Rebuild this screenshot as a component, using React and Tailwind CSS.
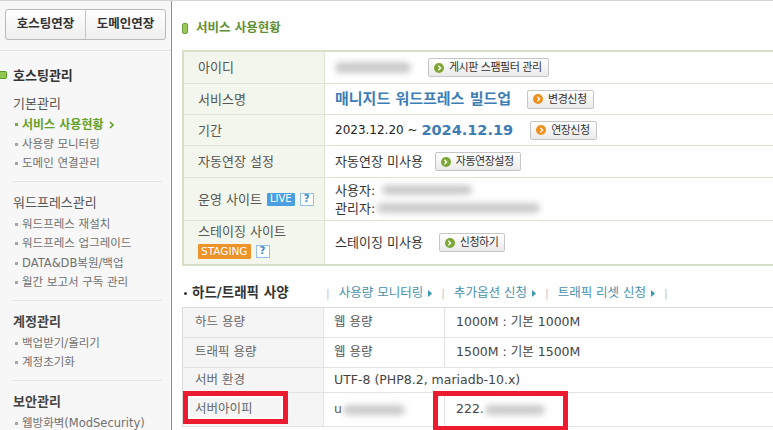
import React from "react";

const SECTIONS = [
  {
    title: "워드프레스관리",
    bold: false,
    items: ["워드프레스 재설치", "워드프레스 업그레이드", "DATA&DB복원/백업", "월간 보고서 구독 관리"],
  },
  { title: "계정관리", bold: true, items: ["백업받기/올리기", "계정초기화"] },
  { title: "보안관리", bold: true, items: ["웹방화벽(ModSecurity)"] },
];

function Chevron({ className }) {
  return (
    <svg viewBox="0 0 6 8" className={className}>
      <path d="M1.5 1 L4.5 4 L1.5 7" fill="none" stroke="currentColor" strokeWidth="1.7" />
    </svg>
  );
}

function Btn({ tone = "green", children }) {
  return (
    <span className="inline-flex h-[19px] items-center rounded-[2px] border border-[#c6c6c6] bg-linear-to-b from-white to-[#eaeaea] pl-[5px] pr-[6px] text-[11px] leading-none tracking-[-0.5px] text-[#333]">
      <span
        className={
          tone === "orange"
            ? "mr-[5px] flex h-[10px] w-[10px] items-center justify-center rounded-full bg-[#f0901c] text-white"
            : "mr-[5px] flex h-[10px] w-[10px] items-center justify-center rounded-full bg-[#7da735] text-white"
        }
      >
        <Chevron className="h-[6px] w-[5px]" />
      </span>
      {children}
    </span>
  );
}

function Blur({ className }) {
  return <span className={`inline-block rounded-full bg-[#cacaca] blur-[3px] ${className}`} />;
}

function Help() {
  return (
    <span className="flex h-[13px] w-[14px] items-center justify-center border border-[#93c0e4] bg-white text-[10px] font-bold leading-none text-[#3a86c8]">
      ?
    </span>
  );
}

function SideItem({ label, active }) {
  return (
    <li className="flex h-[19.5px] items-center">
      <span className={active ? "ml-[2px] mr-[4px] h-[3px] w-[3px] bg-[#7bab45]" : "ml-[2px] mr-[4px] h-[3px] w-[3px] bg-[#a5a5a5]"} />
      {active ? (
        <span className="flex items-center text-[12px] font-bold text-[#63a12a]">
          서비스 사용현황
          <Chevron className="ml-[5px] h-[8px] w-[7px]" />
        </span>
      ) : (
        <span className="text-[11.5px] text-[#707070]">{label}</span>
      )}
    </li>
  );
}

function Row1({ h, label, children, last }) {
  return (
    <div className={`flex ${h} ${last ? "" : "border-b border-[#dfe5d5]"}`}>
      <div className="flex w-[141px] shrink-0 items-center border-r border-[#dfe5d5] bg-[#f3f6ec] pl-[14px] text-[13px] text-[#555]">
        {label}
      </div>
      <div className="flex flex-1 items-center pl-[10px] text-[13px] text-[#333]">{children}</div>
    </div>
  );
}

function Row2({ h, label, mid, right, span }) {
  return (
    <div className={`flex ${h} border-b border-[#e3e3e3]`}>
      <div className="flex w-[141px] shrink-0 items-center border-r border-[#e3e3e3] bg-[#f5f5f5] pl-[12px] text-[12.5px] text-[#666]">
        {label}
      </div>
      {span ? (
        <div className="flex flex-1 items-center pl-[10px] text-[12.5px] text-[#444]">{span}</div>
      ) : (
        <>
          <div className="flex w-[121px] shrink-0 items-center border-r border-[#e3e3e3] pl-[10px] text-[12.5px] text-[#555]">
            {mid}
          </div>
          <div className="flex flex-1 items-center pl-[11px] text-[12.5px] text-[#444]">{right}</div>
        </>
      )}
    </div>
  );
}

function LinkItem({ children }) {
  return (
    <>
      <span className="ml-[9px] text-[12.5px] text-[#4a8fae]">{children}</span>
      <svg viewBox="0 0 4 7" className="ml-[5px] h-[7px] w-[4px] text-[#3a97b0]">
        <path d="M0 0 L4 3.5 L0 7 Z" fill="currentColor" />
      </svg>
      <span className="ml-[9px] text-[11px] text-[#c6c6c6]">|</span>
    </>
  );
}

export default function App() {
  return (
    <div className="relative flex h-[430px] w-[773px] overflow-hidden border-t border-[#d4d4d4] bg-white font-['DejaVu_Sans','Noto_Sans_CJK_KR',sans-serif] leading-none">
      <aside className="w-[171px] shrink-0 bg-[#f7f7f7]">
        <div className="h-[50px] border-b border-[#e2e2e2] px-[5px] pt-[8px]">
          <div className="flex h-[31px] rounded-[3px] border border-[#b9b9b9] bg-linear-to-b from-white to-[#eeeeee] text-[12.5px] font-bold text-[#333]">
            <span className="flex flex-1 items-center justify-center border-r border-[#c4c4c4]">호스팅연장</span>
            <span className="flex flex-1 items-center justify-center">도메인연장</span>
          </div>
        </div>

        <div className="pl-[13px] pr-[9px]">
          <div className="pb-[7px] pt-[14px]">
            <div className="-ml-[13px] flex h-[20px] items-center">
              <span className="h-[8px] w-[7px] rounded-r-[2px] border border-l-0 border-[#5e9a2b] bg-[#8fc64f]" />
              <span className="ml-[6px] text-[13px] font-bold text-[#333]">호스팅관리</span>
            </div>
            <div className="mt-[8px] flex h-[20px] items-center text-[13px] text-[#555]">기본관리</div>
            <ul className="mt-[2px]">
              <SideItem active />
              <SideItem label="사용량 모니터링" />
              <SideItem label="도메인 연결관리" />
            </ul>
          </div>

          {SECTIONS.map((section) => (
            <div key={section.title} className="border-t border-[#e3e3e3] pb-[7px] pt-[11px]">
              <div
                className={
                  section.bold
                    ? "flex h-[20px] items-center text-[13px] font-bold text-[#444]"
                    : "flex h-[20px] items-center text-[13px] text-[#555]"
                }
              >
                {section.title}
              </div>
              <ul className="mt-[2px]">
                {section.items.map((item) => (
                  <SideItem key={item} label={item} />
                ))}
              </ul>
            </div>
          ))}
        </div>
      </aside>

      <main className="flex-1 border-l border-[#8e8e8e] pl-[10px]">
        <div className="mt-[20px] flex h-[14px] items-center">
          <span className="h-[11px] w-[6px] rounded-[2px] border border-[#6a9b3a] bg-[#9acb5a]" />
          <span className="ml-[8px] text-[12.5px] font-bold text-[#5f8f35]">서비스 사용현황</span>
        </div>

        <div className="mt-[15px] border-y-2 border-l-2 border-[#d6e0c7]">
          <Row1 h="h-[32px]" label="아이디">
            <Blur className="h-[11px] w-[76px]" />
            <span className="ml-[17px]">
              <Btn>게시판 스팸필터 관리</Btn>
            </span>
          </Row1>
          <Row1 h="h-[31px]" label="서비스명">
            <span className="text-[15px] font-bold text-[#3d7db6]">매니지드 워드프레스 빌드업</span>
            <span className="ml-[16px]">
              <Btn tone="orange">변경신청</Btn>
            </span>
          </Row1>
          <Row1 h="h-[31px]" label="기간">
            <span className="text-[12px] text-[#222]">2023.12.20 ~&nbsp;</span>
            <span className="text-[14.5px] font-bold text-[#3d7db6]">2024.12.19</span>
            <span className="ml-[17px]">
              <Btn tone="orange">연장신청</Btn>
            </span>
          </Row1>
          <Row1 h="h-[32px]" label="자동연장 설정">
            <span>자동연장 미사용</span>
            <span className="ml-[12px]">
              <Btn>자동연장설정</Btn>
            </span>
          </Row1>
          <Row1
            h="h-[43px]"
            label={
              <span className="flex items-center">
                운영 사이트
                <span className="ml-[5px] flex h-[13px] items-center rounded-[1px] bg-[#4a9ee2] px-[3px] text-[10px] text-white">
                  LIVE
                </span>
                <span className="ml-[5px]">
                  <Help />
                </span>
              </span>
            }
          >
            <div className="flex flex-col">
              <div className="flex h-[18px] items-center">
                사용자:
                <Blur className="ml-[7px] h-[10px] w-[90px]" />
              </div>
              <div className="flex h-[18px] items-center">
                관리자:
                <Blur className="ml-[2px] h-[10px] w-[163px]" />
              </div>
            </div>
          </Row1>
          <Row1
            h="h-[43px]"
            last
            label={
              <span className="flex h-full flex-col pt-[2px]">
                <span className="flex h-[16px] items-center">스테이징 사이트</span>
                <span className="mt-[4px] flex h-[16px] items-center">
                  <span className="flex h-[15px] items-center rounded-[1px] bg-[#ee922a] px-[3px] text-[10.5px] text-white">
                    STAGING
                  </span>
                  <span className="ml-[5px]">
                    <Help />
                  </span>
                </span>
              </span>
            }
          >
            <span>스테이징 미사용</span>
            <span className="ml-[16px]">
              <Btn>신청하기</Btn>
            </span>
          </Row1>
        </div>

        <div className="mt-[17px] flex h-[20px] items-center">
          <span className="ml-[2px] h-[3px] w-[3px] rounded-full bg-[#333]" />
          <span className="ml-[5px] w-[134px] text-[13.5px] font-bold text-[#333]">하드/트래픽 사양</span>
          <span className="text-[11px] text-[#c6c6c6]">|</span>
          <LinkItem>사용량 모니터링</LinkItem>
          <LinkItem>추가옵션 신청</LinkItem>
          <LinkItem>트래픽 리셋 신청</LinkItem>
        </div>

        <div className="mt-[4px] border-l border-t border-[#dadada]">
          <Row2 h="h-[30px]" label="하드 용량" mid="웹 용량" right="1000M : 기본 1000M" />
          <Row2 h="h-[30px]" label="트래픽 용량" mid="웹 용량" right="1500M : 기본 1500M" />
          <Row2 h="h-[25px]" label="서버 환경" span="UTF-8 (PHP8.2, mariadb-10.x)" />
          <Row2
            h="h-[34px]"
            label="서버아이피"
            mid={
              <span className="flex items-center">
                u
                <Blur className="ml-[1px] h-[10px] w-[62px]" />
              </span>
            }
            right={
              <span className="flex items-center">
                222.
                <Blur className="ml-[1px] h-[10px] w-[60px]" />
              </span>
            }
          />
        </div>
      </main>

      <div className="absolute left-[183px] top-[390px] h-[33px] w-[105px] border-[5px] border-[#ec1b2f] shadow-[inset_0_0_0_2px_#fff]" />
      <div className="absolute left-[433px] top-[390px] h-[40px] w-[135px] border-[5px] border-[#ec1b2f]" />
    </div>
  );
}
